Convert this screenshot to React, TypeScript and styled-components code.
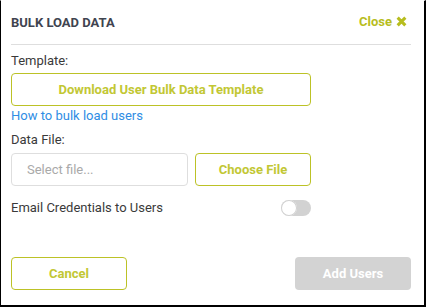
import React from "react";
import styled, { createGlobalStyle } from "styled-components";

const Global = createGlobalStyle`
  html, body { margin: 0; padding: 0; background: #fff; }
  body { font-family: Roboto, "Noto Sans", Arial, sans-serif; }
  * { box-sizing: border-box; }
`;

const OLIVE = "#bcc226";
const OLIVE_TEXT = "#c2c734";

const Dialog = styled.div`
  width: 426px;
  height: 307px;
  background: #fff;
  border-left: 1px solid #000;
  border-right: 2px solid #000;
  border-bottom: 2px solid #000;
  border-top: 1px solid #fff;
  padding: 0 13px 0 10px;
  display: flex;
  flex-direction: column;
`;

const Header = styled.div`
  height: 44px;
  flex-shrink: 0;
  display: flex;
  align-items: center;
  justify-content: space-between;
  border-bottom: 1px solid #dedede;
`;

const Title = styled.h1`
  margin: 0;
  font-size: 13px;
  font-weight: 700;
  color: #3f4450;
`;

const CloseButton = styled.button`
  border: none;
  background: none;
  padding: 0;
  display: flex;
  align-items: center;
  gap: 4px;
  font-family: inherit;
  font-size: 13px;
  font-weight: 700;
  color: #b7bd1e;
  cursor: pointer;
  margin-top: -2px;
  margin-right: 4px;
`;

const Body = styled.div`
  display: flex;
  flex-direction: column;
  padding-top: 8px;
  flex: 1;
`;

const Label = styled.div`
  font-size: 13px;
  line-height: 16px;
  color: #3a3a3a;
`;

const OutlineButton = styled.button<{ $width: number }>`
  width: ${(p) => p.$width}px;
  height: 33px;
  border: 1px solid ${OLIVE};
  border-radius: 4px;
  background: #fff;
  font-family: inherit;
  font-size: 13px;
  font-weight: 700;
  color: ${OLIVE_TEXT};
  cursor: pointer;
`;

const Link = styled.a`
  font-size: 13px;
  line-height: 16px;
  color: #2f8de4;
  text-decoration: none;
  margin-top: 2px;
`;

const Section = styled.div<{ $top: number }>`
  display: flex;
  flex-direction: column;
  gap: 4px;
  margin-top: ${(p) => p.$top}px;
`;

const FileRow = styled.div`
  display: flex;
  gap: 7px;
  margin-top: 1px;
`;

const FileInput = styled.input`
  width: 177px;
  height: 33px;
  border: 1px solid #dedede;
  border-radius: 4px;
  padding: 0 15px;
  font-family: inherit;
  font-size: 13px;
  color: #333;
  &::placeholder { color: #a9a9a9; }
`;

const ToggleRow = styled.div`
  width: 300px;
  display: flex;
  align-items: center;
  justify-content: space-between;
  margin-top: 14px;
  height: 16px;
`;

const Toggle = styled.span`
  position: relative;
  width: 30px;
  height: 16px;
  border-radius: 8px;
  background: #d2d2d2;
  display: inline-block;
  &::after {
    content: "";
    position: absolute;
    left: 0;
    top: 0;
    width: 16px;
    height: 16px;
    border-radius: 50%;
    background: #fff;
    box-shadow: 0 0 0 1px #d0d0d0 inset;
  }
`;

const Footer = styled.div`
  display: flex;
  justify-content: space-between;
  padding-bottom: 15px;
  margin-top: auto;
`;

const FilledButton = styled.button`
  width: 116px;
  height: 33px;
  border: none;
  border-radius: 4px;
  background: #d3d3d3;
  color: #fff;
  font-family: inherit;
  font-size: 13px;
  font-weight: 700;
`;

const XIcon = () => (
  <svg width="11" height="11" viewBox="0 0 10 10">
    <path d="M1.5 1.5 L8.5 8.5 M8.5 1.5 L1.5 8.5" stroke="#b7bd1e" strokeWidth="2.8" strokeLinecap="butt" />
  </svg>
);

export default function App() {
  return (
    <>
      <Global />
      <Dialog>
        <Header>
          <Title>BULK LOAD DATA</Title>
          <CloseButton>
            Close <XIcon />
          </CloseButton>
        </Header>
        <Body>
          <Section $top={0}>
            <Label>Template:</Label>
            <OutlineButton $width={300}>Download User Bulk Data Template</OutlineButton>
          </Section>
          <Link href="#">How to bulk load users</Link>
          <Section $top={8}>
            <Label>Data File:</Label>
            <FileRow>
              <FileInput placeholder="Select file..." readOnly />
              <OutlineButton $width={116}>Choose File</OutlineButton>
            </FileRow>
          </Section>
          <ToggleRow>
            <Label>Email Credentials to Users</Label>
            <Toggle />
          </ToggleRow>
          <Footer>
            <OutlineButton $width={116}>Cancel</OutlineButton>
            <FilledButton>Add Users</FilledButton>
          </Footer>
        </Body>
      </Dialog>
    </>
  );
}
